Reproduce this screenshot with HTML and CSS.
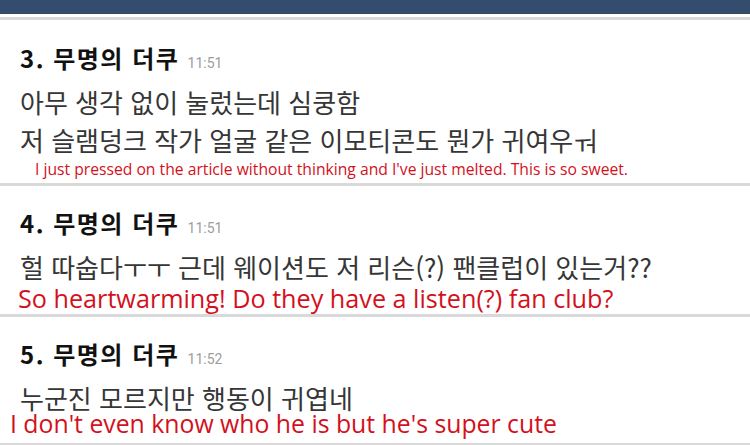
FILE: index.html
```html
<!DOCTYPE html>
<html lang="ko">
<head>
    <meta charset="UTF-8">
    <meta name="viewport" content="width=device-width, initial-scale=1.0">
    <title>무명의 더쿠</title>
    <link rel="stylesheet" href="styles.css">
</head>
<body>
    <div class="topbar"></div>

    <div class="comments">
        <div class="comment first">
            <div class="title">3. 무명의 더쿠 <span class="time">11:51</span></div>
            <div class="body">아무 생각 없이 눌렀는데 심쿵함<br>저 슬램덩크 작가 얼굴 같은 이모티콘도 뭔가 귀여우ㅝ</div>
            <div class="tr small">I just pressed on the article without thinking and I've just melted. This is so sweet.</div>
        </div>

        <div class="comment second">
            <div class="title">4. 무명의 더쿠 <span class="time">11:51</span></div>
            <div class="body">헐 따숩다ㅜㅜ 근데 웨이션도 저 리슨(?) 팬클럽이 있는거??</div>
            <div class="tr medium">So heartwarming! Do they have a listen(?) fan club?</div>
        </div>

        <div class="comment third">
            <div class="title">5. 무명의 더쿠 <span class="time">11:52</span></div>
            <div class="body">누군진 모르지만 행동이 귀엽네</div>
            <div class="tr large">I don't even know who he is but he's super cute</div>
        </div>
    </div>
</body>
</html>
```

FILE: styles.css
```css
body {
    margin: 0;
    background: #ffffff;
    font-family: "Noto Sans CJK KR", "Noto Sans", sans-serif;
    overflow: hidden;
}
.topbar {
    height: 13px;
    background: #344c6d;
    border-bottom: 1px solid #2f4a5c;
    margin-bottom: 3px;
}
.comments {
    border-top: 3px solid #d9d9d9;
}
.comment {
    border-bottom: 3px solid #d9d9d9;
    padding: 19px 0 0 20px;
}
.comment.first {
    padding-top: 20px;
}
.title {
    font-size: 24px;
    font-weight: bold;
    letter-spacing: 1.5px;
    color: #111111;
    line-height: 36px;
}
.time {
    font-family: Roboto, "Noto Sans", sans-serif;
    font-size: 14px;
    font-weight: normal;
    letter-spacing: 0;
    line-height: 1;
    color: #9d9d9d;
    margin-left: 0;
}
.body {
    margin-top: 7px;
    font-size: 26px;
    line-height: 38px;
    color: #363636;
}
.tr {
    font-family: "Open Sans", sans-serif;
    color: #d3111c;
}
.tr.small {
    font-size: 15.7px;
    line-height: 20px;
    margin-left: 15px;
    padding-bottom: 4px;
}
.tr.medium {
    font-size: 25.2px;
    line-height: 26px;
    margin: -1px 0 0 -2px;
    padding-bottom: 3px;
}
.tr.large {
    font-size: 24.8px;
    line-height: 28px;
    margin: -8px 0 0 -10px;
    padding-bottom: 6px;
}
```
